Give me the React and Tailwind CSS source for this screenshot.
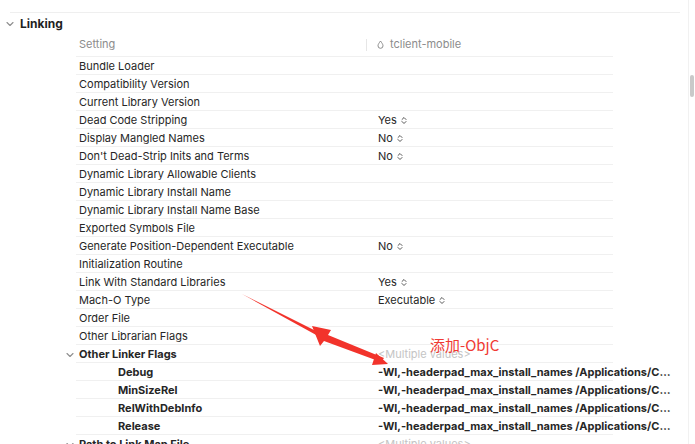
import React from "react";

const rows = [
  { name: "Bundle Loader" },
  { name: "Compatibility Version" },
  { name: "Current Library Version" },
  { name: "Dead Code Stripping", value: "Yes", pick: true },
  { name: "Display Mangled Names", value: "No", pick: true },
  { name: "Don't Dead-Strip Inits and Terms", value: "No", pick: true },
  { name: "Dynamic Library Allowable Clients" },
  { name: "Dynamic Library Install Name" },
  { name: "Dynamic Library Install Name Base" },
  { name: "Exported Symbols File" },
  { name: "Generate Position-Dependent Executable", value: "No", pick: true },
  { name: "Initialization Routine" },
  { name: "Link With Standard Libraries", value: "Yes", pick: true },
  { name: "Mach-O Type", value: "Executable", pick: true },
  { name: "Order File" },
  { name: "Other Librarian Flags" },
  { name: "Other Linker Flags", group: true, multi: true },
  { name: "Debug", sub: true, flag: true },
  { name: "MinSizeRel", sub: true, flag: true },
  { name: "RelWithDebInfo", sub: true, flag: true },
  { name: "Release", sub: true, flag: true },
  { name: "Path to Link Map File", group: true, multi: true },
];

const FLAG = "-Wl,-headerpad_max_install_names /Applications/C…";

function Chevron({ className }) {
  return (
    <svg width="8" height="6" viewBox="0 0 8 6" className={className}>
      <path d="M1 1.5 L4 4.5 L7 1.5" fill="none" stroke="#8e8e8e" strokeWidth="1.1" strokeLinecap="round" strokeLinejoin="round" />
    </svg>
  );
}

function UpDown() {
  return (
    <svg width="6" height="9" viewBox="0 0 6 9" className="ml-[4px]">
      <path d="M1 3.5 L3 1.5 L5 3.5 M1 5.5 L3 7.5 L5 5.5" fill="none" stroke="#555" strokeWidth="1" strokeLinecap="round" strokeLinejoin="round" />
    </svg>
  );
}

function Row({ r }) {
  return (
    <div className="relative flex h-[18px] items-center">
      {r.group && <Chevron className="absolute left-[66px] top-[7px]" />}
      <div className="ml-[76px] flex h-full w-[537px] items-center border-b border-[#f0f0f0] pt-[2px]">
        <div className={`w-[302px] shrink-0 whitespace-nowrap ${r.sub ? "pl-[42px] font-bold" : "pl-[3px]"} ${r.group ? "font-bold" : ""}`}>
          {r.name}
        </div>
        <div className="flex items-center whitespace-nowrap">
          {r.value && <span>{r.value}</span>}
          {r.pick && <UpDown />}
          {r.multi && <span className="text-[#c4c4c4]">&lt;Multiple values&gt;</span>}
          {r.flag && <span className="font-bold">{FLAG}</span>}
        </div>
      </div>
    </div>
  );
}

export default function App() {
  return (
    <div className="relative h-[444px] w-[695px] overflow-hidden bg-white text-[11px] text-[#262626]" style={{ fontFamily: "Inter, 'Noto Sans', sans-serif" }}>
      {/* scroll gutter */}
      <div className="absolute right-[6px] top-0 h-full w-px bg-[#f1f1f1]" />
      <div className="absolute right-[1px] top-[75px] h-[22px] w-[4px] rounded-full bg-[#c9c9c9]" />

      <div className="pt-[12px]">
        <div className="ml-[10px] h-px w-[670px] bg-[#efefef]" />

        <div className="flex h-[20px] items-center pt-[2px]">
          <Chevron className="ml-[6px] mr-[6px]" />
          <span className="text-[12px] font-bold text-[#1f1f1f]">Linking</span>
        </div>

        <div className="flex h-[24px] items-center">
          <div className="ml-[76px] flex h-full w-[537px] items-center border-b border-[#f0f0f0]">
            <div className="w-[290px] pl-[3px] text-[#8c8c8c]">Setting</div>
            <div className="h-[12px] w-px bg-[#e6e6e6]" />
            <svg width="7" height="9" viewBox="0 0 7 9" className="ml-[10px] mr-[6px]">
              <path d="M3.5 1 C2.2 3 1 4.2 1 5.8 A2.5 2.5 0 0 0 6 5.8 C6 4.2 4.8 3 3.5 1 Z" fill="none" stroke="#8c8c8c" strokeWidth="1" />
            </svg>
            <span className="text-[#8c8c8c]">tclient-mobile</span>
          </div>
        </div>

        {rows.map((r) => (
          <Row key={r.name} r={r} />
        ))}
      </div>

      {/* annotation */}
      <div className="absolute left-[430px] top-[334px] text-[15px] text-[#f03a33]" style={{ fontFamily: "'Noto Sans CJK SC', 'Noto Sans', sans-serif" }}>
        添加-ObjC
      </div>
      <svg className="absolute left-0 top-0" width="695" height="444" viewBox="0 0 695 444">
        <polygon points="242,294 320,333 318,336" fill="#f2332b" />
        <polygon points="312,326 331,330 328,335 384,358 381,362 324,341 320,346" fill="#f2332b" />
        <polygon points="376,353 388,364 372,365" fill="#f2332b" />
      </svg>
    </div>
  );
}
